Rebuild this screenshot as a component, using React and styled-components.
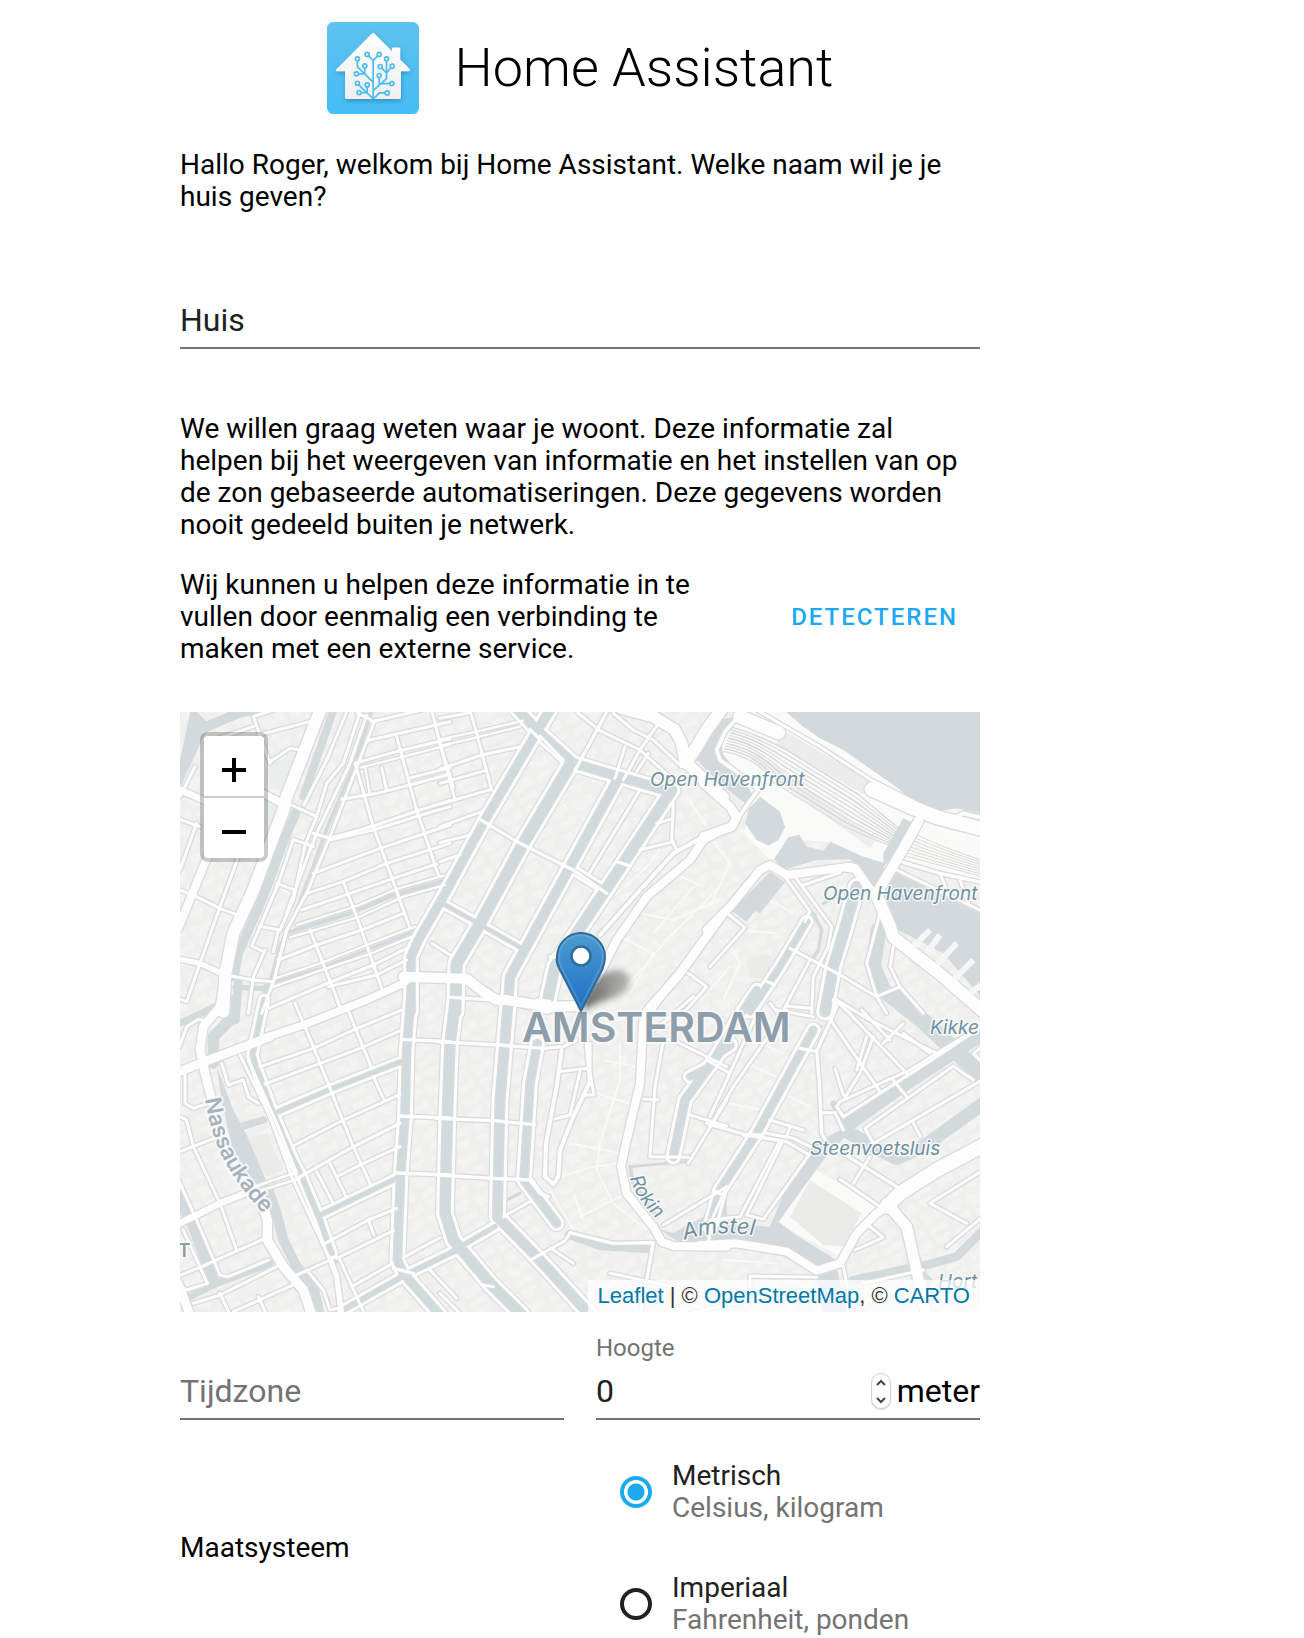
import React, { useState } from "react";
import styled, { createGlobalStyle } from "styled-components";

const GlobalStyle = createGlobalStyle`
  *, *::before, *::after { box-sizing: border-box; }
  body {
    margin: 0;
    background: #fff;
    color: #000;
    font-family: Roboto, "Noto Sans", sans-serif;
    font-size: 28px;
    line-height: 32px;
  }
`;

const Page = styled.main`
  padding: 22px 24px 0 180px;
`;

const Content = styled.form`
  display: flex;
  flex-direction: column;
  max-width: 800px;
`;

const Header = styled.header`
  display: flex;
  align-items: center;
  justify-content: center;
  gap: 36px;
  height: 92px;
  margin-bottom: 35px;
`;

const Logo = styled.svg`
  width: 92px;
  height: 92px;
  flex: none;
`;

const Title = styled.h1`
  margin: 0;
  font-size: 54px;
  line-height: 64px;
  font-weight: 300;
`;

const Paragraph = styled.p`
  margin: 0;
`;

const DetectRow = styled.div`
  display: flex;
  align-items: center;
  gap: 32px;
  margin: 28px 0 47px;
  > p { flex: 1; }
`;

const DetectButton = styled.button`
  flex: none;
  height: 72px;
  padding: 0 22px;
  border: 0;
  border-radius: 8px;
  background: none;
  color: #1da9f2;
  font: 500 24px/32px Roboto, sans-serif;
  letter-spacing: 2px;
  text-transform: uppercase;
  cursor: pointer;
`;

const Field = styled.div`
  display: flex;
  flex-direction: column;
  flex: 1;
  min-width: 0;
  justify-content: flex-end;
`;

const NameField = styled(Field)`
  flex: none;
  height: 136px;
  margin-bottom: 64px;
`;

const FieldLabel = styled.label`
  color: #737373;
  font-size: 24px;
  line-height: 32px;
`;

const FieldLine = styled.div`
  display: flex;
  align-items: center;
  gap: 6px;
  height: 56px;
  border-bottom: 2px solid #737373;
  font-size: 32px;
  line-height: 48px;
`;

const Input = styled.input`
  flex: 1;
  min-width: 0;
  height: 48px;
  padding: 0;
  border: 0;
  outline: 0;
  background: none;
  color: #212121;
  font: 400 32px/48px Roboto, sans-serif;
  appearance: textfield;
  &::placeholder { color: #737373; opacity: 1; }
  &::-webkit-inner-spin-button { appearance: none; }
`;

const Stepper = styled.span`
  display: flex;
  flex-direction: column;
  width: 20px;
  height: 36px;
  border: 1px solid #d0d0d0;
  border-radius: 10px;
  box-shadow: 0 1px 1px rgba(0, 0, 0, 0.2);
  overflow: hidden;
`;

const StepButton = styled.button`
  display: flex;
  flex: 1;
  align-items: center;
  justify-content: center;
  padding: 0;
  border: 0;
  background: none;
  svg { width: 12px; height: 8px; }
`;

const FieldRow = styled.div`
  display: flex;
  gap: 32px;
  height: 108px;
`;

const UnitRow = styled.div`
  display: grid;
  grid-template-columns: 1fr 1fr;
  align-items: center;
  gap: 32px;
  margin-top: 40px;
`;

const Options = styled.div`
  display: flex;
  flex-direction: column;
  gap: 48px;
  padding-left: 24px;
`;

const Option = styled.label`
  display: flex;
  align-items: center;
  gap: 20px;
  color: #212121;
`;

const Radio = styled.input`
  appearance: none;
  flex: none;
  width: 32px;
  height: 32px;
  margin: 0;
  border: 4px solid #212121;
  border-radius: 50%;
  &:checked {
    border-color: #1da9f2;
    background: radial-gradient(circle, #1da9f2 8px, transparent 9px);
  }
`;

const OptionText = styled.span`
  display: flex;
  flex-direction: column;
`;

const Hint = styled.span`
  color: #737373;
`;

const MapFrame = styled.div`
  position: relative;
  height: 600px;
  overflow: hidden;
  background: #efefed;
`;

const MapCanvas = styled.svg`
  display: block;
  width: 100%;
  height: 100%;
`;

const ZoomControl = styled.div`
  position: absolute;
  top: 20px;
  left: 20px;
  display: flex;
  flex-direction: column;
  gap: 2px;
  border: 4px solid rgba(0, 0, 0, 0.2);
  border-radius: 8px;
  background: #ccc;
  background-clip: padding-box;
`;

const ZoomButton = styled.button`
  display: flex;
  align-items: center;
  justify-content: center;
  width: 60px;
  height: 60px;
  padding: 0;
  border: 0;
  border-radius: ${(p) => (p.$top ? "4px 4px 0 0" : "0 0 4px 4px")};
  background: #fff;
  cursor: pointer;
  svg { width: 26px; height: 26px; margin-top: 8px; }
`;

const Attribution = styled.div`
  position: absolute;
  right: 0;
  bottom: 0;
  height: 32px;
  padding: 0 10px;
  background: rgba(255, 255, 255, 0.7);
  color: #333;
  font: 22px/32px "Liberation Sans", Helvetica, Arial, sans-serif;
  white-space: nowrap;
  a { color: #0078a8; text-decoration: none; }
`;

const WaterLabel = styled.text`
  fill: #6f919f;
  stroke: rgba(250, 250, 250, 0.85);
  stroke-width: 3px;
  stroke-linejoin: round;
  paint-order: stroke;
  font: italic 400 ${(p) => p.$size || 19}px Inter, "Open Sans", sans-serif;
`;

const PlaceLabel = styled.text`
  fill: ${(p) => p.$fill || "#8e9eab"};
  stroke: rgba(250, 250, 250, 0.85);
  stroke-width: 4px;
  stroke-linejoin: round;
  paint-order: stroke;
  font: 600 ${(p) => p.$size}px Inter, "Open Sans", sans-serif;
`;

/* City plan, one entry per map sheet. Each stroke is [width, points].
   "canals" have a quay road on both banks, "water" has none. */
const sheets = [
  {
    x: 0, y: 0,
    parks: ["285,208 380,150 335,275 290,252", "285,308 330,320 305,388 285,380"],
    areas: ["62,30 80,36 125,80 100,110 30,265 30,180"],
    water: [
      [30, "90,88 200,42 260,25"],
      [24, "490,30 400,290"],
      [28, "378,335 335,440 280,590 205,760 192,830"],
      [12, "605,30 555,190 520,270 465,400 430,500 380,630 330,740 305,830 290,935"],
      [13, "830,540 680,582 540,640 360,696"],
      [10, "740,692 590,750 450,806 310,848"],
      [16, "195,862 300,866"], [26, "205,850 196,960"], [20, "290,860 270,980"],
    ],
    roads: [
      [36, "455,20 420,110 350,290 340,330 250,570 190,700 166,820 160,935 152,925"],
      [20, "20,265 100,300"], [22, "260,270 345,315"], [9, "365,315 440,350"],
      [16, "30,778 90,790 165,825"], [9, "165,825 250,840 310,845"],
      [24, "130,430 100,500 25,685"],
      [9, "205,470 150,620 90,790 50,905 25,895"], [9, "30,570 90,595 150,625 215,650"],
      [9, "20,355 90,380"], [9, "75,200 30,290"], [9, "250,50 300,190"], [9, "250,50 310,30"],
      [9, "265,105 430,62"], [9, "250,80 130,120"], [9, "300,185 360,145 392,150"],
      [9, "80,370 30,510"], [9, "530,36 470,180 402,315"],
      [9, "570,36 520,190 470,250 440,350 405,435 370,600 330,690"],
      [9, "430,440 370,418 325,550 270,680 245,738 275,752"],
      [9, "590,46 540,190 440,400 420,450 350,640"], [9, "562,40 602,58"],
      [10, "430,400 480,415 610,378 750,330 840,302"],
      [9, "320,550 375,570"], [9, "275,680 330,690"],
      [9, "285,750 250,830 235,940"], [9, "325,690 310,755"], [9, "350,690 312,840 275,940"],
      [9, "615,60 565,190 480,410 410,580 350,690 315,830"],
      [9, "785,30 810,130 850,262"], [9, "680,110 740,330 805,525"],
      [9, "555,190 610,380 720,685"], [9, "520,545 560,650 635,865"], [9, "420,690 510,920"],
      [9, "635,205 650,270"], [7, "585,200 600,285"],
      [9, "605,65 840,10"], [9, "590,122 690,100 840,65"],
      [9, "560,188 690,152 840,116"], [7, "572,203 700,170 840,134"],
      [9, "515,298 620,280 720,255 840,222"], [9, "715,235 840,203"],
      [9, "430,520 630,445 840,375"], [9, "480,420 610,390 755,345 840,320"],
      [9, "410,580 520,545 650,490 840,430"], [9, "395,630 540,580 670,535 800,492"],
      [7, "380,675 560,618 680,567 820,527"], [7, "360,712 570,650 700,590 825,555"],
      [9, "325,780 440,735 575,690 700,640"], [7, "315,835 450,790 590,735 735,680"],
      [7, "305,862 470,805 600,762 735,706"],
      [9, "295,925 460,855 610,795 715,742"], [9, "475,860 620,825 710,780"],
      [9, "785,730 840,765"],
    ],
  },
  {
    x: 810, y: 0,
    canals: [
      [22, "285,105 200,250 135,360 10,590 -65,720 -87,770 -87,935"],
      [24, "225,20 295,95 400,190 530,228 690,275"],
      [24, "330,30 290,95"],
      [30, "390,195 250,430 115,680 50,790 46,935"],
      [24, "535,235 390,500 270,720 210,830 205,905"],
      [28, "695,270 550,490 410,700 345,800 320,915"],
      [8, "10,612 100,662 240,742"],
      [8, "400,510 490,566"],
    ],
    areas: ["760,175 800,105 840,60 850,180 800,200"],
    roads: [
      [10, "120,358 240,430 400,510 500,580"], [10, "530,485 565,496"], [10, "330,770 350,772"],
      [10, "270,88 300,118"], [10, "500,36 405,212"], [9, "300,108 370,180"],
      [9, "410,36 480,92 600,150 700,240"], [9, "520,40 580,90 640,120 725,200"],
      [9, "655,70 600,150 550,240"], [9, "555,140 525,235"], [9, "625,160 590,215"],
      [34, "545,25 640,50 705,90 725,130 735,185 850,292"],
      [36, "850,20 800,90 770,140 740,185"],
      [12, "840,385 790,410 700,460 600,570 480,705"],
      [24, "840,392 790,420 750,480 620,590 530,720 500,780 470,840"],
      [9, "700,310 695,420 710,450"], [9, "700,355 650,370"], [9, "600,450 700,425"],
      [9, "600,270 445,525"],
      [30, "-110,830 80,836 130,875 170,900 200,900 320,920 430,918"],
      [26, "850,640 720,820 620,935"], [9, "745,820 800,860 730,940"],
      [9, "90,30 110,100 155,270"], [9, "0,130 45,300"], [9, "0,55 90,38"],
      [7, "0,118 110,95 250,62"], [7, "0,138 110,112 240,80"],
      [9, "0,207 125,165 240,140"], [9, "0,250 135,212"], [9, "0,312 155,268"],
      [9, "0,380 125,335"], [9, "0,428 90,405"], [9, "0,485 60,465"],
    ],
    alleys: ["555,560 620,500 660,450", "600,640 700,660 840,600", "640,700 760,560", "560,860 680,720 840,560", "740,290 800,380", "700,520 790,560", "520,700 640,760 570,880"],
  },
  {
    x: 1620, y: 0,
    plazas: ["150,30 220,30 740,330 810,400 810,545 560,490 560,520 450,470 360,425 250,420 230,500 190,490 100,400 130,290 20,190 20,120 60,60"],
    areas: [
      "222,30 280,80 330,115 400,150 560,262 610,305 680,335 740,325 820,342 820,30",
      "150,290 118,325 105,370 140,420 175,437 205,420 225,382 210,335",
      "235,412 268,404 290,440 340,452 362,425 455,468 525,490 500,575 450,500 420,478 320,480 220,510 192,478",
      "580,355 612,370 560,460 520,500 520,460",
      "560,520 820,645 820,900 700,760 565,690 500,580",
      "180,515 225,547 150,640 135,632 110,665 65,632",
      "-30,190 30,60 70,50 30,150 130,285 115,318 30,250",
    ],
    rails: true,
    canals: [
      [28, "440,560 400,700 370,800 345,935"],
      [16, "290,665 210,800 120,935"],
    ],
    water: [
      [46, "505,690 490,800 520,870 620,950"], [10, "310,640 335,690 325,750 300,790"],
      [10, "440,550 340,610"],
    ],
    roads: [
      [40, "90,50 205,98"], [9, "140,30 330,140 480,238 640,320"],
      [42, "485,268 600,320 680,352 820,388"], [12, "740,350 760,340 820,355"],
      [11, "80,55 45,95 20,150 30,180 75,212 145,268 90,345"],
      [26, "-20,250 60,320 80,352 65,380 -20,410"],
      [24, "-10,690 60,620 150,510 180,495 230,525 420,500"],
      [26, "410,502 435,505 495,590"],
      [36, "500,585 540,680 550,712 700,830 820,935"],
      [30, "500,580 560,480 625,365"],
      [10, "580,487 690,520 820,548"], [9, "690,520 710,570"], [9, "750,540 775,610"],
      [9, "560,510 820,635"],
      [9, "225,530 300,635 285,665"], [9, "255,530 365,680 355,740 310,830 305,940"],
      [9, "280,555 390,518"], [9, "240,745 400,830 500,890"],
      [9, "500,890 570,860 640,940"], [9, "510,640 470,790 500,890 530,940"],
      [9, "550,740 540,800 570,860"], [9, "300,780 215,940"], [9, "165,842 195,855"],
      [9, "55,642 105,683 0,800"], [9, "380,905 420,940"], [9, "230,918 300,925"],
    ],
    alleys: ["0,410 60,490 0,620", "90,690 200,700", "60,800 0,870", "180,600 250,640", "50,720 90,790 40,900", "640,400 800,440"],
    plots: ["710,618 750,630 740,658 705,645", "110,780 170,760 210,790 180,830 120,835"],
    piers: ["610,740 660,690", "650,760 690,705", "680,795 740,730", "730,840 790,780", "780,880 820,850"],
  },
  {
    x: 0, y: 900,
    areas: ["140,200 190,330 230,405 290,545 250,555 185,440 155,300", "30,560 70,650 90,690 60,690 30,640"],
    canals: [
      [12, "282,0 247,165 260,205 310,340 370,480 400,540 450,660 485,760"],
      [10, "690,186 480,268 325,335"], [10, "680,535 455,643"],
      [22, "722,0 710,150 705,350 692,520 682,780 700,820 810,945"],
      [12, "860,750 700,828 520,930"],
    ],
    water: [
      [34, "195,0 180,60 130,110 130,190"], [30, "295,570 320,640 340,720 380,800 430,860 450,950"],
      [22, "195,385 280,360"], [30, "60,660 130,840"], [22, "60,890 140,850 300,790"],
      [20, "30,70 140,18"], [20, "475,730 500,780"],
    ],
    roads: [
      [26, "160,-40 150,20 100,80 90,150 105,220 125,300"],
      [16, "120,300 160,430 250,580 290,640"],
      [28, "280,620 292,660 292,720 340,800 400,870 425,945"],
      [26, "20,218 130,175 300,110"], [22, "300,108 400,75 590,0 700,-50 725,-70"],
      [20, "25,672 150,610 250,570"], [8, "240,565 380,517"], [8, "240,582 390,535"],
      [10, "390,530 550,440 690,370"],
      [9, "375,10 430,140 480,265 550,440 600,550"], [9, "510,20 500,0"],
      [9, "530,20 605,205"], [9, "610,230 642,300"],
      [9, "270,200 430,145 550,90 695,30"], [9, "285,252 450,190 570,145 695,90"],
      [9, "375,435 520,360 690,283"], [9, "500,530 580,490 690,440"],
      [9, "480,490 528,590"], [9, "440,515 490,610"],
      [9, "465,730 595,660 680,625"], [9, "500,775 670,692"], [9, "595,660 612,705"],
      [9, "545,860 668,790"], [16, "480,775 500,830 515,945"], [9, "510,780 585,945"],
      [9, "370,830 480,780"], [9, "410,810 460,870 480,930 500,925"],
      [9, "210,165 300,350 365,530 480,780"], [9, "235,180 320,370 380,520"],
      [9, "155,190 175,255 220,240 235,290 265,310"],
      [9, "45,225 45,310 70,325 120,308"], [9, "30,350 50,360 70,440 150,610 198,745"],
      [9, "30,455 150,408"], [9, "25,540 80,660 150,825 175,830 295,780"],
      [9, "30,826 95,800 285,715"], [9, "40,690 112,850 50,870 30,860"],
      [9, "70,910 150,885 320,800"], [9, "150,880 180,945"], [9, "265,890 290,945"],
      [9, "190,935 380,850"], [26, "25,850 60,945"], [9, "28,140 50,80 85,58 115,65"],
      [10, "695,118 840,125"], [10, "690,348 840,354"], [10, "680,519 840,525"],
      [9, "705,770 810,713"], [9, "780,810 860,895"], [10, "670,805 730,820"],
    ],
    plots: ["210,420 290,400 340,510 290,530"],
  },
  {
    x: 810, y: 900,
    canals: [
      [28, "46,0 30,130 22,350 15,640 40,720 150,850 245,945"],
      [26, "205,0 180,300 172,650 290,770 450,945"],
      [22, "292,130 270,250 252,540 350,670"],
      [10, "40,752 165,680"], [22, "870,135 840,155 735,300 700,470"],
    ],
    water: [
      [22, "385,705 480,740 620,748"], [8, "570,500 740,485"], [10, "200,600 240,580"],
      [12, "570,500 580,550 650,650"],
    ],
    areas: ["655,685 700,700 790,650 830,560 860,500 860,740 720,730"],
    roads: [
      [10, "-10,125 180,135 310,145 370,140 410,120"], [10, "-10,355 160,362 285,374"],
      [10, "-10,525 160,535 275,540"], [10, "170,0 30,-8"], [10, "290,0 330,5"],
      [12, "365,150 350,260 318,430 315,530 340,553 355,530 360,450 400,350 450,245 440,130"],
      [9, "355,215 440,205"], [9, "345,357 390,345 420,215"], [9, "450,130 450,220 462,285 435,285"],
      [24, "660,-10 610,60 600,250 560,420 543,500 560,580 640,680 665,725 700,738 860,740"],
      [9, "670,120 645,260 630,470 745,472"], [9, "610,297 655,300"], [9, "640,110 700,120 860,200"],
      [9, "745,490 860,300"], [9, "750,345 860,378"], [9, "630,100 680,60 760,-10"],
      [10, "390,698 520,730 640,728 620,840 600,945"], [9, "275,778 375,722 390,700"],
      [9, "190,650 270,605"], [11, "270,540 300,580 325,590"], [9, "340,750 400,790"],
      [9, "510,820 700,860 860,905"], [9, "670,675 860,560"], [9, "805,730 815,660 860,560"],
      [9, "130,855 160,860"],
      [9, "0,880 60,940"],
    ],
    alleys: ["540,130 540,240 480,430 470,510 520,610 620,690", "360,530 460,500 540,490", "400,580 430,660", "420,650 560,580", "470,280 600,320", "490,180 590,200", "390,430 540,460", "330,570 400,690"],
  },
  {
    x: 1620, y: 900,
    plazas: ["320,510 510,620 390,770 205,670"],
    plots: ["300,540 455,640 400,740 340,735 240,650"],
    canals: [
      [20, "310,90 260,180 140,400 30,570 0,680"],
      [18, "140,-30 80,60 0,200 -60,230"],
    ],
    areas: ["0,670 180,680 230,560 300,440 400,385 410,405 340,480 205,665 250,700 370,775 390,800 330,810 230,750 80,720 -10,720"],
    water: [
      [44, "850,80 740,150 600,240 410,375"], [40, "410,395 490,440 560,475 640,440 820,310"],
      [50, "560,-10 690,110 820,230"], [16, "370,310 400,390"], [18, "345,0 335,50"],
      [7, "335,80 290,110 280,140"], [26, "840,670 740,770 650,795 430,840"],
      [70, "350,830 380,950"], [14, "640,820 660,840 640,900"],
    ],
    roads: [
      [42, "840,425 680,510 570,580 530,620"],
      [24, "530,620 500,640 440,700 390,790 320,812 230,755 80,730 -30,735"],
      [32, "530,610 590,680 615,790 650,950"],
      [10, "320,150 328,250 335,400 350,430 560,560"], [10, "270,145 320,155 380,20 370,0"],
      [10, "-10,370 110,405 230,425 290,460"], [10, "180,360 280,390"], [9, "230,410 240,380"],
      [9, "0,660 90,650 205,430"], [9, "215,430 110,645 160,658 300,460"],
      [9, "170,400 250,415 300,440"], [10, "10,572 40,585"],
      [10, "100,405 150,405"], [9, "400,350 380,320 390,305 600,210 810,80"],
      [9, "400,350 680,170 830,70"],
      [9, "380,0 590,220"], [9, "365,65 510,275"], [9, "455,30 540,120"],
      [9, "580,100 660,160"], [9, "545,235 590,290"], [9, "375,205 400,285"],
      [9, "490,110 450,220 400,300"], [9, "470,110 440,210"],
      [9, "490,430 465,385 730,198 790,240"], [9, "490,430 830,232"],
      [9, "610,370 632,410"], [9, "820,510 660,610 770,670"], [9, "580,70 520,130"],
      [9, "390,538 510,620"], [9, "430,550 480,470"], [9, "335,338 375,338 400,390"],
      [9, "710,740 830,640"], [9, "400,800 430,945"], [9, "435,750 520,712 480,680"],
      [9, "-60,940 120,900 120,828 320,832"], [9, "460,850 640,810"],
      [30, "700,-70 830,40"], [9, "380,0 480,60 680,160"], [9, "200,30 310,50"],
      [9, "230,70 180,10"], [9, "60,220 -10,180"], [9, "830,200 790,160 830,130"],
      [9, "150,20 0,350"], [9, "230,30 70,260 0,380"],
    ],
    alleys: ["110,190 200,230", "60,310 150,330", "200,270 300,320", "130,120 220,160", "40,780 200,790"],
  },
];

const line = (points, key, extra) => <polyline key={key} points={points} {...extra} />;

function Layer({ pick, children }) {
  return sheets.map((s, i) => (
    <g key={i} transform={`translate(${s.x} ${s.y})`}>
      {(s[pick] || []).map((item, k) => children(item, k))}
    </g>
  ));
}

function Strokes({ pick, color, grow = 0 }) {
  return (
    <g fill="none" stroke={color} strokeLinejoin="round" strokeLinecap="round">
      <Layer pick={pick}>{(r, k) => line(r[1], k, { strokeWidth: r[0] + grow })}</Layer>
    </g>
  );
}

function Shapes({ pick, color }) {
  return (
    <g fill={color}>
      <Layer pick={pick}>{(p, k) => <polygon key={k} points={p} />}</Layer>
    </g>
  );
}

function Rails() {
  const tracks = [0, 1, 2, 3, 4, 5, 6, 7, 8, 9];
  return (
    <g transform="translate(1620 0)" fill="none">
      <path d="M210 112 L470 262" stroke="#ececec" strokeWidth="46" />
      <path d="M130 170 L490 430" stroke="#eeeeee" strokeWidth="34" />
      {tracks.map((t) => (
        <path
          key={t}
          d={`M${66 - t * 3} ${82 + t * 8} Q${130 + t} ${98 + t * 8} ${230 - t * 4} ${150 + t * 11} L${440 - t * 4} ${280 + t * 11} Q${500 - t * 3} ${330 + t * 9} ${575 - t * 4} ${392 + t * 5}`}
          stroke={t % 2 ? "#dedede" : "#d6d6d6"}
          strokeWidth="4"
        />
      ))}
      {tracks.slice(0, 8).map((t) => (
        <path
          key={`e${t}`}
          d={`M${622 - t * 5} ${405 + t * 9} Q${690} ${440 + t * 8} 820 ${482 + t * 7}`}
          stroke="#dadada"
          strokeWidth="3"
        />
      ))}
    </g>
  );
}

function Marker() {
  return (
    <g>
      <path d="M401 299 C409 270 424 256 442 259 C456 264 452 280 432 286 C420 290 410 294 401 299Z" fill="url(#shade)" filter="url(#soft)" />
      <path
        d="M401 299 L379.500 257 C375.500 249.500 377 245 377 245 C377 231.500 388 221 401 221 C414 221 425 231.500 425 245 C425 250 424 253 422.500 257 Z"
        fill="url(#pin)" stroke="#2e6c97" strokeWidth="2" strokeLinejoin="round"
      />
      <path
        d="M401 294 L381.500 255.500 C379.500 251 379 248 379 245 C379 232.500 389 223 401 223 C413 223 423 232.500 423 245 C423 249 422 252 420.500 255.500 Z"
        fill="none" stroke="#fff" strokeOpacity="0.14" strokeWidth="2"
      />
      <circle cx="401" cy="244" r="9.500" fill="#fff" stroke="#2e6c97" strokeWidth="2.500" />
    </g>
  );
}

function CityMap() {
  return (
    <MapCanvas viewBox="0 0 800 600" preserveAspectRatio="xMidYMid slice" role="img" aria-label="Amsterdam">
      <defs>
        <pattern id="houses" width="150" height="120" patternUnits="userSpaceOnUse" patternTransform="rotate(-24)">
          <path
            fill="#f3f3f1"
            d="M6 10H38V22H50V8H74V30H60V38H22V28H6Z M90 6H136V18H124V34H98V24H90Z M10 56H30V48H58V66H44V78H10Z M74 50H96V58H118V48H142V74H112V84H82V70H74Z M14 94H48V88H66V110H34V116H14Z M84 98H112V92H140V112H100V118H84Z"
          />
        </pattern>
        <linearGradient id="pin" x1="0" y1="0" x2="0" y2="1">
          <stop offset="0" stopColor="#4b9bd2" />
          <stop offset="1" stopColor="#1d6fc4" />
        </linearGradient>
        <linearGradient id="shade" x1="0" y1="0" x2="1" y2="0">
          <stop offset="0" stopColor="#000" stopOpacity="0.6" />
          <stop offset="1" stopColor="#000" stopOpacity="0.22" />
        </linearGradient>
        <filter id="soft" x="-30%" y="-60%" width="160%" height="220%">
          <feGaussianBlur stdDeviation="3" />
        </filter>
        <path id="nassaukade" d="M25 387 C32 430 46 464 90 508" />
        <path id="rokin" d="M450 466 C454 482 466 497 482 512" />
        <path id="amstel" d="M504 528 C530 520 550 520 580 524" />
      </defs>
      <g transform="scale(0.333333) translate(-30 -36)">
        <rect x="0" y="0" width="2460" height="1860" fill="#efefed" />
        <rect x="0" y="0" width="2460" height="1860" fill="url(#houses)" />
        <Shapes pick="plazas" color="#fafaf8" />
        <Shapes pick="plots" color="#ebebea" />
        <Shapes pick="parks" color="#e9efeb" />
        <Rails />
        <g fill="none" stroke="#f9f9f7" strokeWidth="6" strokeLinejoin="round">
          <Layer pick="alleys">{(p, k) => line(p, k)}</Layer>
        </g>
        <Shapes pick="areas" color="#d3d9dc" />
        <Strokes pick="water" color="#d3dadc" />
        <Strokes pick="canals" color="#dadbdb" grow={32} />
        <Strokes pick="roads" color="#dadbdb" grow={8} />
        <Strokes pick="canals" color="#fdfdfd" grow={25} />
        <Strokes pick="canals" color="#dadbdb" grow={7} />
        <Strokes pick="canals" color="#d1dadc" />
        <Strokes pick="roads" color="#fdfdfd" />
        <g stroke="#f6f6f4" strokeWidth="18">
          <Layer pick="piers">{(p, k) => line(p, k)}</Layer>
        </g>
      </g>
      <WaterLabel x="470" y="74">Open Havenfront</WaterLabel>
      <WaterLabel x="643" y="188">Open Havenfront</WaterLabel>
      <WaterLabel x="750" y="322">Kikke</WaterLabel>
      <WaterLabel x="630" y="443">Steenvoetsluis</WaterLabel>
      <WaterLabel x="758" y="576">Hort</WaterLabel>
      <WaterLabel><textPath href="#rokin">Rokin</textPath></WaterLabel>
      <WaterLabel $size={22}><textPath href="#amstel">Amstel</textPath></WaterLabel>
      <PlaceLabel $size={22} $fill="#a5b2bd"><textPath href="#nassaukade">Nassaukade</textPath></PlaceLabel>
      <PlaceLabel $size={19} x="-2" y="545">T</PlaceLabel>
      <PlaceLabel $size={41} x="342" y="330">AMSTERDAM</PlaceLabel>
      <Marker />
    </MapCanvas>
  );
}

const nodes = [
  [148, 118], [184, 118], [119, 131], [206, 131], [141, 152], [187, 154], [223, 153],
  [116, 176], [184, 181], [119, 204], [222, 205], [148, 209], [124, 232], [208, 233],
];

function HomeLogo() {
  return (
    <Logo viewBox="28 21 275 275" aria-hidden="true">
      <defs>
        <linearGradient id="sky" x1="0" y1="0" x2="0" y2="1">
          <stop offset="0" stopColor="#5dc2ef" />
          <stop offset="1" stopColor="#46bdf5" />
        </linearGradient>
        <linearGradient id="wall" x1="0" y1="0" x2="0" y2="1">
          <stop offset="0" stopColor="#fff" />
          <stop offset="1" stopColor="#efefef" />
        </linearGradient>
        <filter id="drop" x="-20%" y="-20%" width="140%" height="150%">
          <feDropShadow dx="2" dy="7" stdDeviation="6" floodColor="#1b6f9c" floodOpacity="0.55" />
        </filter>
      </defs>
      <rect x="28" y="21" width="275" height="275" rx="19" fill="url(#sky)" />
      <path
        d="M161 57 Q166 51 171 57 L222 108 V101 Q222 97 226 97 H243 Q247 97 247 101 V133 L276 162 Q279 167 273 168 H249 V247 Q249 251 245 251 H86 Q82 251 82 247 V168 H58 Q52 167 56 162 Z"
        fill="url(#wall)" filter="url(#drop)"
      />
      <g fill="none" stroke="#4cbcf0" strokeWidth="5" strokeLinejoin="round">
        <path d="M166 251V136L152 122M166 136L180 122M119 137V155L166 201M141 158V177M122 176H139M166 226L206 190V137M190 158L206 173L220 157M184 187V208M216 205H188M123 209L166 251M148 215V233M130 232H147M202 233H185L167 250" />
        {nodes.map(([x, y]) => (
          <circle key={`${x}-${y}`} cx={x} cy={y} r="6" fill="#fafafa" />
        ))}
      </g>
    </Logo>
  );
}

export default function App() {
  const [unit, setUnit] = useState("metric");
  const [height, setHeight] = useState(0);
  return (
    <Page>
      <GlobalStyle />
      <Content onSubmit={(e) => e.preventDefault()}>
        <Header>
          <HomeLogo />
          <Title>Home Assistant</Title>
        </Header>
        <Paragraph>Hallo Roger, welkom bij Home Assistant. Welke naam wil je je huis geven?</Paragraph>
        <NameField>
          <FieldLine>
            <Input aria-label="Naam" defaultValue="Huis" />
          </FieldLine>
        </NameField>
        <Paragraph>
          We willen graag weten waar je woont. Deze informatie zal helpen bij het weergeven van informatie
          en het instellen van op de zon gebaseerde automatiseringen. Deze gegevens worden nooit gedeeld
          buiten je netwerk.
        </Paragraph>
        <DetectRow>
          <Paragraph>
            Wij kunnen u helpen deze informatie in te vullen door eenmalig een verbinding te maken met een
            externe service.
          </Paragraph>
          <DetectButton type="button">Detecteren</DetectButton>
        </DetectRow>
        <MapFrame>
          <CityMap />
          <ZoomControl>
            <ZoomButton $top type="button" aria-label="Zoom in">
              <svg viewBox="0 0 26 26"><path d="M13 1V25M1 13H25" stroke="#000" strokeWidth="4" /></svg>
            </ZoomButton>
            <ZoomButton type="button" aria-label="Zoom out">
              <svg viewBox="0 0 26 26"><path d="M1 13H25" stroke="#000" strokeWidth="4" /></svg>
            </ZoomButton>
          </ZoomControl>
          <Attribution>
            <a href="#leaflet">Leaflet</a> | © <a href="#osm">OpenStreetMap</a>, © <a href="#carto">CARTO</a>
          </Attribution>
        </MapFrame>
        <FieldRow>
          <Field>
            <FieldLine>
              <Input aria-label="Tijdzone" placeholder="Tijdzone" />
            </FieldLine>
          </Field>
          <Field>
            <FieldLabel htmlFor="elevation">Hoogte</FieldLabel>
            <FieldLine>
              <Input
                id="elevation"
                type="number"
                value={height}
                onChange={(e) => setHeight(e.target.value)}
              />
              <Stepper>
                <StepButton type="button" aria-label="Hoger" onClick={() => setHeight(Number(height) + 1)}>
                  <svg viewBox="0 0 12 8"><path d="M2 6L6 2L10 6" fill="none" stroke="#444" strokeWidth="2" /></svg>
                </StepButton>
                <StepButton type="button" aria-label="Lager" onClick={() => setHeight(Number(height) - 1)}>
                  <svg viewBox="0 0 12 8"><path d="M2 2L6 6L10 2" fill="none" stroke="#444" strokeWidth="2" /></svg>
                </StepButton>
              </Stepper>
              <span>meter</span>
            </FieldLine>
          </Field>
        </FieldRow>
        <UnitRow role="radiogroup" aria-labelledby="unit-title">
          <div id="unit-title">Maatsysteem</div>
          <Options>
            <Option>
              <Radio type="radio" name="unit" checked={unit === "metric"} onChange={() => setUnit("metric")} />
              <OptionText>
                Metrisch
                <Hint>Celsius, kilogram</Hint>
              </OptionText>
            </Option>
            <Option>
              <Radio type="radio" name="unit" checked={unit === "imperial"} onChange={() => setUnit("imperial")} />
              <OptionText>
                Imperiaal
                <Hint>Fahrenheit, ponden</Hint>
              </OptionText>
            </Option>
          </Options>
        </UnitRow>
      </Content>
    </Page>
  );
}
